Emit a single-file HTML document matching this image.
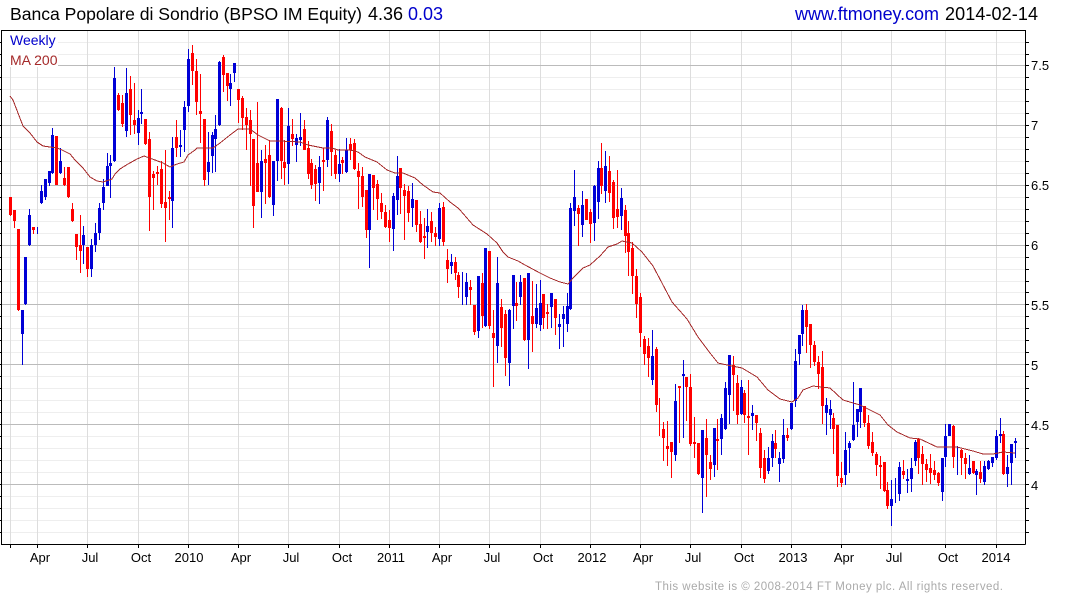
<!DOCTYPE html>
<html><head><meta charset="utf-8"><title>Banca Popolare di Sondrio</title>
<style>
html,body{margin:0;padding:0;background:#fff;width:1075px;height:600px;overflow:hidden}
svg{display:block}
text{font-family:"Liberation Sans",Arial,sans-serif}
</style></head><body>
<svg width="1075" height="600" viewBox="0 0 1075 600" xmlns="http://www.w3.org/2000/svg">
<rect width="1075" height="600" fill="#fff"/>
<g shape-rendering="crispEdges" fill="none">
<path stroke="#eeeeee" d="M2 42.5H1025M2 54.5H1025M2 77.5H1025M2 89.5H1025M2 101.5H1025M2 113.5H1025M2 137.5H1025M2 149.5H1025M2 161.5H1025M2 173.5H1025M2 197.5H1025M2 209.5H1025M2 221.5H1025M2 233.5H1025M2 257.5H1025M2 269.5H1025M2 281.5H1025M2 292.5H1025M2 316.5H1025M2 328.5H1025M2 340.5H1025M2 352.5H1025M2 376.5H1025M2 388.5H1025M2 400.5H1025M2 412.5H1025M2 436.5H1025M2 448.5H1025M2 460.5H1025M2 472.5H1025M2 496.5H1025M2 508.5H1025M2 520.5H1025M2 532.5H1025"/>
<path stroke="#dddddd" d="M10.5 31V544M37.5 31V544M87.5 31V544M138.5 31V544M188.5 31V544M238.5 31V544M288.5 31V544M339.5 31V544M389.5 31V544M439.5 31V544M489.5 31V544M540.5 31V544M590.5 31V544M640.5 31V544M690.5 31V544M741.5 31V544M791.5 31V544M841.5 31V544M891.5 31V544M945.5 31V544M996.5 31V544"/>
<path stroke="#bbbbbb" d="M2 65.5H1025M2 125.5H1025M2 185.5H1025M2 245.5H1025M2 304.5H1025M2 364.5H1025M2 424.5H1025M2 484.5H1025"/>
</g>
<rect x="2" y="31" width="56" height="36" fill="#fff"/>
<g shape-rendering="crispEdges" fill="none">
<path stroke="#ff0000" stroke-width="1" d="M10.5 197V216M14.5 210V228M18.5 229V311M33.5 227V234M56.5 136V185M64.5 167V186M68.5 167V198M72.5 203V222M76.5 234V260M80.5 215V273M87.5 247V277M118.5 93V111M122.5 95V127M130.5 76V135M134.5 83V134M145.5 119V145M149.5 132V231M153.5 171V210M157.5 166V185M161.5 161V208M165.5 150V242M169.5 191V220M176.5 120V157M192.5 45V85M196.5 59V115M200.5 74V143M204.5 119V186M223.5 55V92M227.5 73V101M238.5 89V123M242.5 96V130M246.5 108V150M250.5 110V186M253.5 139V228M257.5 102V192M265.5 145V204M269.5 140V198M281.5 107V179M284.5 140V185M292.5 119V146M304.5 120V150M308.5 141V179M311.5 159V189M315.5 165V201M323.5 148V191M331.5 124V176M335.5 150V179M342.5 157V174M350.5 138V160M354.5 139V170M358.5 163V209M362.5 167V207M366.5 190V238M373.5 175V210M377.5 180V220M381.5 193V219M385.5 205V228M389.5 210V242M400.5 168V214M404.5 184V240M408.5 186V222M416.5 200V232M420.5 211V243M424.5 218V259M431.5 212V242M435.5 227V246M443.5 202V246M447.5 249V283M455.5 257V280M458.5 272V298M470.5 280V305M474.5 305V335M482.5 273V328M489.5 251V329M493.5 310V387M501.5 299V347M505.5 310V376M516.5 282V321M524.5 278V341M532.5 281V352M543.5 294V329M547.5 304V329M555.5 299V335M578.5 205V246M586.5 199V220M590.5 209V243M601.5 143V194M609.5 156V202M613.5 180V229M617.5 170V228M625.5 205V253M628.5 221V276M632.5 242V294M636.5 269V318M640.5 293V347M644.5 336V365M648.5 338V377M656.5 347V412M659.5 398V436M663.5 422V461M667.5 421V466M671.5 442V478M679.5 386V443M686.5 377V421M690.5 374V446M694.5 417V458M698.5 443V475M706.5 419V497M710.5 455V480M717.5 419V470M733.5 356V411M737.5 375V424M744.5 390V423M748.5 380V455M756.5 415V441M760.5 428V478M764.5 450V483M775.5 430V458M787.5 428V441M806.5 304V353M810.5 324V368M814.5 341V366M818.5 356V389M822.5 351V424M833.5 413V454M837.5 425V487M841.5 462V487M864.5 406V427M868.5 415V449M872.5 432V456M876.5 452V476M880.5 456V489M884.5 462V492M887.5 482V509M903.5 460V479M918.5 438V474M922.5 446V485M926.5 459V482M930.5 454V484M934.5 461V480M938.5 472V486M953.5 425V468M961.5 449V475M965.5 453V479M973.5 461V474M980.5 461V483M1003.5 431V475"/>
<path stroke="#ff0000" stroke-width="3" d="M10.5 197V215M14.5 210V221M18.5 229V310M33.5 227V230M56.5 136V185M64.5 178V185M68.5 167V197M72.5 209V221M76.5 234V247M80.5 245V251M87.5 247V269M118.5 95V110M122.5 103V124M130.5 89V115M134.5 120V125M145.5 119V144M149.5 139V197M153.5 174V178M157.5 172V174M161.5 169V204M165.5 202V208M169.5 197V199M176.5 137V148M192.5 53V71M196.5 71V102M200.5 111V114M204.5 119V180M223.5 57V75M227.5 73V86M238.5 89V100M242.5 98V118M246.5 117V125M250.5 120V134M253.5 139V206M257.5 163V192M265.5 159V163M269.5 155V197M281.5 108V161M284.5 162V168M292.5 134V139M304.5 129V150M308.5 148V174M311.5 163V185M315.5 169V184M323.5 160V162M331.5 131V152M335.5 155V174M342.5 160V163M350.5 144V150M354.5 143V169M358.5 171V177M362.5 176V197M366.5 190V230M373.5 175V188M377.5 184V199M381.5 203V212M385.5 212V227M389.5 220V228M400.5 168V188M404.5 190V196M408.5 191V213M416.5 200V225M420.5 224V242M424.5 236V238M431.5 221V233M435.5 233V237M443.5 207V242M447.5 260V269M455.5 262V273M458.5 275V287M470.5 287V290M474.5 305V332M482.5 283V316M489.5 251V326M493.5 333V338M501.5 307V328M505.5 314V358M516.5 303V306M524.5 278V340M532.5 316V324M543.5 294V318M547.5 312V314M555.5 299V318M578.5 208V214M586.5 199V220M590.5 212V224M601.5 168V186M609.5 171V193M613.5 182V218M617.5 209V217M625.5 210V236M628.5 233V252M632.5 248V276M636.5 276V304M640.5 297V333M644.5 339V354M648.5 346V358M656.5 349V405M663.5 429V438M667.5 446V449M671.5 442V452M679.5 386V388M686.5 377V387M690.5 387V444M694.5 442V444M698.5 443V474M706.5 438V455M710.5 462V469M717.5 439V441M733.5 365V375M737.5 383V415M744.5 393V415M748.5 416V418M756.5 415V423M760.5 433V468M764.5 458V479M775.5 443V449M787.5 435V438M806.5 310V327M810.5 324V345M814.5 345V362M818.5 362V374M822.5 367V406M833.5 418V429M837.5 425V476M841.5 478V483M864.5 406V423M868.5 423V446M872.5 442V453M876.5 454V465M880.5 465V467M884.5 462V491M887.5 490V506M903.5 471V475M918.5 439V458M922.5 454V464M926.5 464V470M930.5 468V473M934.5 470V475M938.5 473V483M953.5 426V457M961.5 450V458M965.5 458V464M973.5 461V473M980.5 472V479M1003.5 434V474"/>
<path stroke="#0000d6" stroke-width="1" d="M22.5 310V365M25.5 257V305M29.5 209V246M37.5 227V234M41.5 185V204M45.5 179V200M49.5 171V186M52.5 128V174M60.5 148V174M83.5 226V264M91.5 239V277M95.5 223V252M99.5 203V240M103.5 179V210M107.5 153V186M110.5 155V198M114.5 67V162M126.5 68V137M138.5 110V145M141.5 89V124M172.5 137V228M180.5 130V157M184.5 101V152M188.5 49V112M208.5 132V185M212.5 132V173M215.5 115V172M219.5 61V126M230.5 74V106M234.5 63V82M261.5 150V218M273.5 161V216M277.5 99V181M288.5 108V184M296.5 134V162M300.5 113V146M319.5 156V204M327.5 117V167M339.5 149V182M346.5 138V173M369.5 174V268M393.5 193V251M397.5 156V215M412.5 183V227M427.5 209V248M439.5 203V246M451.5 254V274M462.5 272V305M466.5 273V305M478.5 276V338M485.5 248V327M497.5 257V363M509.5 309V386M513.5 275V329M520.5 275V305M528.5 273V369M536.5 284V328M540.5 280V331M551.5 293V328M559.5 314V349M563.5 306V347M567.5 293V332M570.5 203V310M574.5 170V226M582.5 191V237M594.5 185V241M598.5 161V219M605.5 151V203M621.5 188V230M652.5 330V385M675.5 384V461M683.5 360V438M702.5 430V513M714.5 428V477M721.5 414V455M725.5 382V430M729.5 355V424M741.5 380V415M752.5 405V430M768.5 447V474M772.5 434V467M779.5 452V482M783.5 419V463M791.5 403V430M795.5 349V407M799.5 335V365M802.5 305V346M826.5 398V435M830.5 400V429M845.5 432V485M849.5 441V473M853.5 382V441M857.5 409V437M860.5 388V428M891.5 480V526M895.5 478V503M899.5 462V501M907.5 469V493M911.5 458V492M915.5 440V466M942.5 458V501M945.5 424V467M949.5 424V436M957.5 446V475M969.5 455V475M976.5 469V495M984.5 461V485M988.5 460V470M992.5 457V467M996.5 430V460M1000.5 418V443M1007.5 455V487M1011.5 444V485M1015.5 438V458"/>
<path stroke="#0000d6" stroke-width="3" d="M22.5 310V334M25.5 257V304M29.5 215V245M41.5 191V203M45.5 179V197M49.5 171V183M52.5 135V173M60.5 161V173M83.5 235V245M91.5 245V269M95.5 233V245M99.5 208V233M103.5 187V203M107.5 166V186M110.5 163V166M114.5 78V161M126.5 93V131M138.5 118V133M141.5 112V114M172.5 148V201M180.5 145V147M184.5 107V130M188.5 59V106M208.5 162V172M212.5 135V156M215.5 129V139M219.5 62V125M230.5 83V89M234.5 63V73M261.5 161V192M273.5 161V205M277.5 99V161M288.5 126V164M296.5 138V145M300.5 137V140M319.5 167V183M327.5 120V160M339.5 164V174M346.5 150V172M369.5 174V230M393.5 196V229M397.5 176V200M412.5 199V208M427.5 226V232M439.5 208V239M451.5 262V266M466.5 282V297M478.5 276V331M485.5 248V326M497.5 283V346M509.5 310V363M513.5 275V306M520.5 282V297M528.5 273V340M536.5 308V324M540.5 303V325M551.5 293V307M559.5 324V327M563.5 314V319M567.5 306V324M570.5 208V309M574.5 197V211M582.5 205V225M594.5 186V223M598.5 168V202M605.5 166V191M621.5 198V216M652.5 356V380M675.5 401V455M683.5 374V376M702.5 430V478M714.5 428V465M721.5 418V439M725.5 388V429M729.5 355V395M741.5 387V414M752.5 413V416M768.5 458V471M772.5 441V458M779.5 458V464M783.5 435V459M791.5 403V429M795.5 361V401M799.5 335V354M802.5 310V334M826.5 405V413M830.5 409V415M845.5 450V475M849.5 443V448M853.5 425V440M857.5 409V422M860.5 388V412M891.5 499V506M899.5 467V494M907.5 479V481M911.5 468V479M915.5 442V461M942.5 458V492M945.5 436V457M949.5 424V436M969.5 468V474M976.5 471V475M984.5 466V482M988.5 461V469M992.5 457V463M996.5 436V458M1000.5 434V436M1007.5 467V474M1011.5 444V463M1015.5 441V443"/>
<polyline stroke="#a52a2a" stroke-width="1" points="10,96 13,100 18,113 23,126 30,133 37,142 43,146 50,147 57,148 62,150 70,154 75,160 83,168 90,177 97,181 103,182 112,179 115,174 120,169 128,164 137,159 144,156 155,160 163,163 170,167 177,164 184,162 188,155 195,150 197,148 203,148 213,148 220,143 230,135 238,129 250,129 258,135 270,141 280,141 300,142 308,145 323,148 332,148 338,150 350,150 358,152 365,157 377,162 387,170 395,173 403,173 415,178 423,185 433,192 440,193 450,202 458,208 460,210 473,225 487,234 497,243 503,252 508,257 518,261 525,265 540,273 550,278 560,282 568,284 573,278 583,268 590,265 600,256 608,247 617,244 622,241 632,243 642,252 653,266 662,283 672,302 687,319 698,337 710,353 718,363 727,365 742,368 757,377 768,390 780,399 792,402 798,398 803,390 813,386 830,388 843,400 860,405 870,410 880,415 888,425 897,432 910,438 920,439 937,447 957,447 973,451 983,454 993,454 1003,452 1015,453"/>
<path stroke="#000" d="M1.5 30V544.5M1 30.5H1025.5M1025.5 30V544.5M1 544.5H1025.5"/>
<path stroke="#000" d="M1026 42.5H1029M1026 54.5H1029M1026 65.5H1029M1026 77.5H1029M1026 89.5H1029M1026 101.5H1029M1026 113.5H1029M1026 125.5H1029M1026 137.5H1029M1026 149.5H1029M1026 161.5H1029M1026 173.5H1029M1026 185.5H1029M1026 197.5H1029M1026 209.5H1029M1026 221.5H1029M1026 233.5H1029M1026 245.5H1029M1026 257.5H1029M1026 269.5H1029M1026 281.5H1029M1026 292.5H1029M1026 304.5H1029M1026 316.5H1029M1026 328.5H1029M1026 340.5H1029M1026 352.5H1029M1026 364.5H1029M1026 376.5H1029M1026 388.5H1029M1026 400.5H1029M1026 412.5H1029M1026 424.5H1029M1026 436.5H1029M1026 448.5H1029M1026 460.5H1029M1026 472.5H1029M1026 484.5H1029M1026 496.5H1029M1026 508.5H1029M1026 520.5H1029M1026 532.5H1029"/>
<path stroke="#000" d="M0 42.5H1M0 54.5H1M0 65.5H1M0 77.5H1M0 89.5H1M0 101.5H1M0 113.5H1M0 125.5H1M0 137.5H1M0 149.5H1M0 161.5H1M0 173.5H1M0 185.5H1M0 197.5H1M0 209.5H1M0 221.5H1M0 233.5H1M0 245.5H1M0 257.5H1M0 269.5H1M0 281.5H1M0 292.5H1M0 304.5H1M0 316.5H1M0 328.5H1M0 340.5H1M0 352.5H1M0 364.5H1M0 376.5H1M0 388.5H1M0 400.5H1M0 412.5H1M0 424.5H1M0 436.5H1M0 448.5H1M0 460.5H1M0 472.5H1M0 484.5H1M0 496.5H1M0 508.5H1M0 520.5H1M0 532.5H1"/>
<path stroke="#000" d="M10.5 545V548M37.5 545V548M87.5 545V548M138.5 545V548M188.5 545V548M238.5 545V548M288.5 545V548M339.5 545V548M389.5 545V548M439.5 545V548M489.5 545V548M540.5 545V548M590.5 545V548M640.5 545V548M690.5 545V548M741.5 545V548M791.5 545V548M841.5 545V548M891.5 545V548M945.5 545V548M996.5 545V548"/>
</g>
<text x="10" y="20" font-size="17.6" fill="#000" textLength="352" lengthAdjust="spacing">Banca Popolare di Sondrio (BPSO IM Equity)</text>
<text x="368" y="20" font-size="18" fill="#000">4.36</text>
<text x="408" y="20" font-size="18" fill="#0000cc">0.03</text>
<text x="795" y="20" font-size="18" fill="#0000cc" textLength="144" lengthAdjust="spacing">www.ftmoney.com</text>
<text x="945" y="20" font-size="18" fill="#000" textLength="93" lengthAdjust="spacing">2014-02-14</text>
<text x="10" y="45" font-size="14" fill="#0000cc">Weekly</text>
<text x="10" y="65" font-size="14" fill="#a52a2a">MA 200</text>
<g font-size="13" fill="#000">
<text x="1031" y="70">7.5</text><text x="1031" y="130">7</text><text x="1031" y="190">6.5</text><text x="1031" y="250">6</text><text x="1031" y="310">5.5</text><text x="1031" y="370">5</text><text x="1031" y="430">4.5</text><text x="1031" y="490">4</text>
</g>
<g font-size="13" fill="#000" text-anchor="middle">
<text x="40" y="562">Apr</text><text x="90" y="562">Jul</text><text x="141" y="562">Oct</text><text x="189" y="562">2010</text><text x="241" y="562">Apr</text><text x="291" y="562">Jul</text><text x="342" y="562">Oct</text><text x="391" y="562">2011</text><text x="442" y="562">Apr</text><text x="492" y="562">Jul</text><text x="543" y="562">Oct</text><text x="592" y="562">2012</text><text x="643" y="562">Apr</text><text x="693" y="562">Jul</text><text x="744" y="562">Oct</text><text x="793" y="562">2013</text><text x="844" y="562">Apr</text><text x="894" y="562">Jul</text><text x="948" y="562">Oct</text><text x="996" y="562">2014</text>
</g>
<text x="655" y="590" font-size="11.5" fill="#aaaaaa" textLength="348" lengthAdjust="spacing">This website is © 2008-2014 FT Money plc. All rights reserved.</text>
</svg>
</body></html>
